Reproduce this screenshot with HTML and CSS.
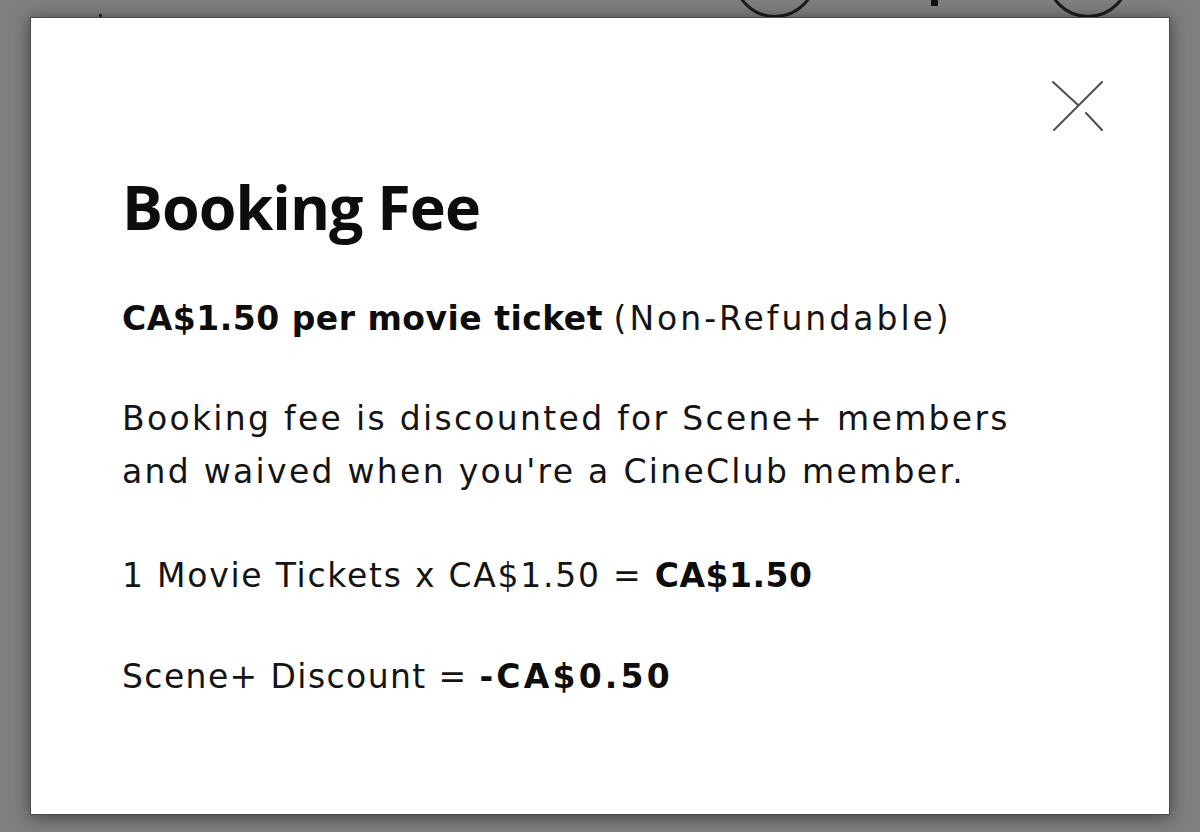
FILE: index.html
```html
<!DOCTYPE html>
<html lang="en">
<head>
<meta charset="utf-8">
<title>Booking Fee</title>
<link rel="stylesheet" href="styles.css">
</head>
<body>
<div class="backdrop">
  <span class="bg-circle bg-circle-a"></span>
  <span class="bg-bar"></span>
  <span class="bg-circle bg-circle-b"></span>
  <span class="bg-dot"></span>
</div>
<div class="stage">
  <div class="modal" role="dialog" aria-labelledby="fee-title">
    <button class="close" aria-label="Close">
      <svg width="52" height="50" viewBox="0 0 52 50" aria-hidden="true">
        <path d="M50 1 L2 49" />
        <path d="M1 1 L26 24" />
        <path d="M34 32 L50 49" />
      </svg>
    </button>
    <h1 id="fee-title" class="title">Booking Fee</h1>
    <p class="line"><strong class="strong">CA$1.50 per movie ticket</strong> <span class="spaced spaced-wide">(Non-Refundable)</span></p>
    <p class="line line-para spaced">Booking fee is discounted for Scene+ members<br>and waived when you're a CineClub member.</p>
    <p class="line line-calc"><span class="spaced spaced-tight">1 Movie Tickets x CA$1.50 = </span><strong class="strong">CA$1.50</strong></p>
    <p class="line"><span class="spaced spaced-tighter">Scene+ Discount = </span><strong class="strong strong-wide">-CA$0.50</strong></p>
  </div>
</div>
</body>
</html>
```
FILE: styles.css
```css
html, body {
  margin: 0;
  padding: 0;
}

body {
  width: 1200px;
  height: 832px;
  overflow: hidden;
  background: #7f7f7f;
  position: relative;
  font-family: "DejaVu Sans", "Open Sans", sans-serif;
  color: #141414;
}

.backdrop {
  position: absolute;
  left: 0;
  top: 0;
  width: 1200px;
  height: 20px;
}

.bg-circle {
  position: absolute;
  width: 78px;
  height: 78px;
  border: 3px solid #1c1c1c;
  border-radius: 50%;
  top: -66px;
}

.bg-circle-a {
  left: 733px;
}

.bg-circle-b {
  left: 1046px;
}

.bg-bar {
  position: absolute;
  left: 931px;
  top: 0;
  width: 7px;
  height: 6px;
  background: #111;
}

.bg-dot {
  position: absolute;
  left: 99px;
  top: 14px;
  width: 3px;
  height: 3px;
  border-radius: 50%;
  background: #111;
}

.stage {
  padding: 17px 0 0 30px;
}

.modal {
  position: relative;
  box-sizing: border-box;
  width: 1140px;
  height: 798px;
  background: #fff;
  border: 1px solid #4a4a4a;
  box-shadow: 0 2px 16px rgba(0, 0, 0, 0.5);
  padding: 154px 0 0 91px;
}

.close {
  position: absolute;
  left: 1021px;
  top: 63px;
  width: 52px;
  height: 50px;
  padding: 0;
  margin: 0;
  border: 0;
  background: transparent;
  cursor: pointer;
}

.close svg {
  display: block;
}

.close path {
  fill: none;
  stroke: #4d4d4d;
  stroke-width: 2;
  stroke-linecap: round;
}

.title {
  margin: 0 0 50px;
  font-family: "Open Sans", "DejaVu Sans", sans-serif;
  font-weight: 700;
  font-size: 61px;
  line-height: 70px;
  letter-spacing: -1px;
  color: #0d0d0d;
}

.line {
  margin: 0 0 47px;
  font-size: 33px;
  line-height: 53px;
  font-weight: 400;
}

.line-para {
  margin-bottom: 51px;
}

.line-calc {
  margin-bottom: 48px;
}

.spaced {
  letter-spacing: 2.3px;
}

.spaced-wide {
  letter-spacing: 3px;
}

.spaced-tight {
  letter-spacing: 1.75px;
}

.spaced-tighter {
  letter-spacing: 1.4px;
}

.strong {
  font-weight: 700;
  letter-spacing: 0.5px;
  color: #0d0d0d;
}

.strong-wide {
  letter-spacing: 3.2px;
}
```
